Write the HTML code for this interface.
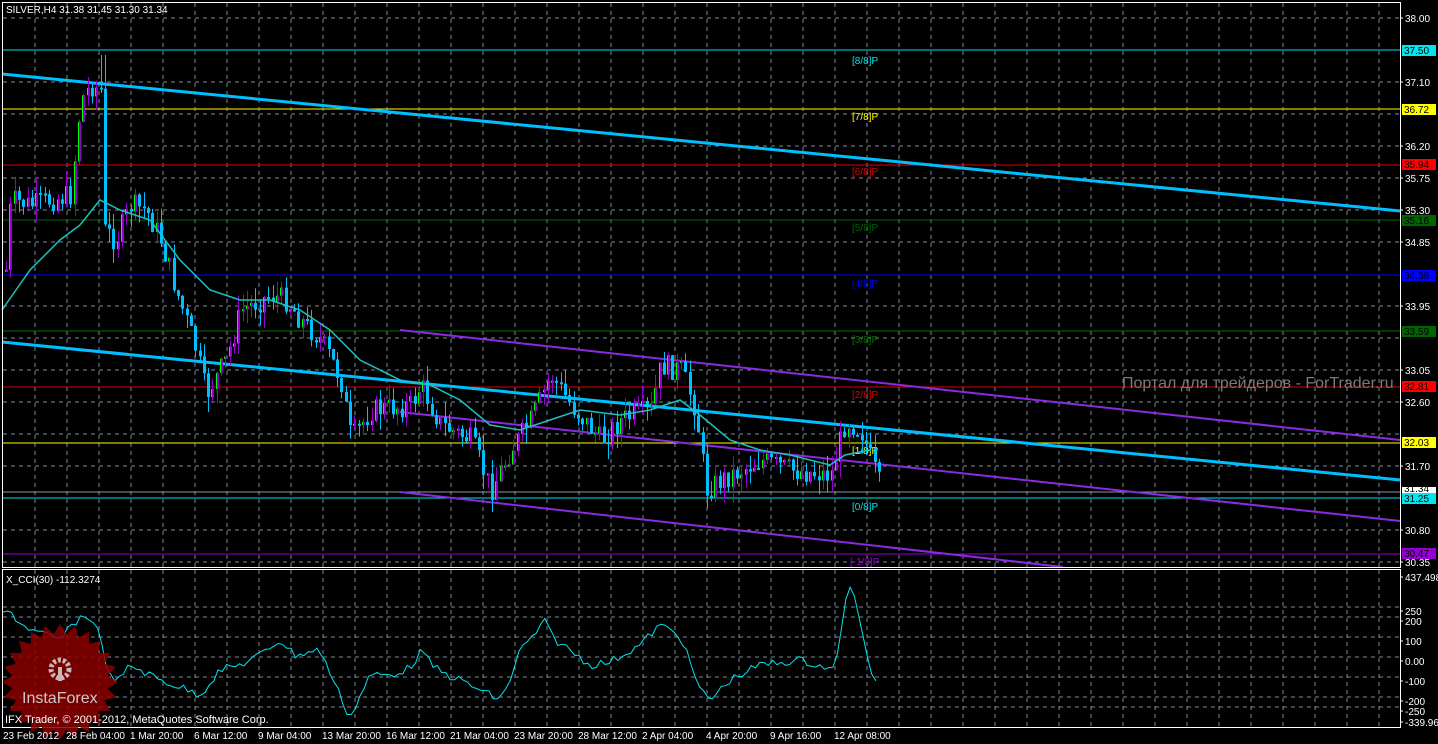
<!DOCTYPE html>
<html><head><meta charset="utf-8"><style>
html,body{margin:0;padding:0;background:#000;}
body{width:1438px;height:744px;overflow:hidden;position:relative;font-family:"Liberation Sans",sans-serif;}
svg{position:absolute;left:0;top:0;}
text{font-family:"Liberation Sans",sans-serif;}
</style></head><body>
<svg id="s" width="1438" height="744" xmlns="http://www.w3.org/2000/svg">
<rect width="1438" height="744" fill="#000"/>
<g id="grid" stroke="#7a8896" stroke-width="1" stroke-dasharray="4,4"></g>
<g stroke-width="1">
<line x1="3" y1="50" x2="1400" y2="50" stroke="#00e5ee"/>
<line x1="3" y1="109" x2="1400" y2="109" stroke="#ffff00"/>
<line x1="3" y1="165" x2="1400" y2="165" stroke="#e00000"/>
<line x1="3" y1="220" x2="1400" y2="220" stroke="#006400"/>
<line x1="3" y1="275" x2="1400" y2="275" stroke="#0000ff"/>
<line x1="3" y1="331" x2="1400" y2="331" stroke="#007000"/>
<line x1="3" y1="387" x2="1400" y2="387" stroke="#e00000"/>
<line x1="3" y1="443" x2="1400" y2="443" stroke="#ffff00"/>
<line x1="3" y1="492" x2="1400" y2="492" stroke="#8a9aa8"/>
<line x1="3" y1="498" x2="1400" y2="498" stroke="#00e5ee"/>
<line x1="3" y1="554" x2="1400" y2="554" stroke="#9400d3"/>
</g>
<g font-size="10">
<text x="852" y="64" fill="#00e5ee">[8/8]P</text>
<text x="852" y="120" fill="#ffff00">[7/8]P</text>
<text x="852" y="175" fill="#e00000">[6/8]P</text>
<text x="852" y="231" fill="#006400">[5/8]P</text>
<text x="852" y="287" fill="#0000ff">[4/8]P</text>
<text x="852" y="343" fill="#007000">[3/8]P</text>
<text x="852" y="398" fill="#e00000">[2/8]P</text>
<text x="852" y="454" fill="#ffff00">[1/8]P</text>
<text x="852" y="510" fill="#00e5ee">[0/8]P</text>
<text x="850" y="565" fill="#9400d3">[-1/8]P</text>
</g>
<text x="1122" y="388" fill="#7a7a7a" font-size="16">Портал для трейдеров - ForTrader.ru</text>
<line x1="2" y1="74" x2="1400" y2="211" stroke="#00bfff" stroke-width="3"/>
<line x1="2" y1="342" x2="1400" y2="480" stroke="#00bfff" stroke-width="3"/>
<line x1="400" y1="330" x2="1400" y2="440" stroke="#8a2be2" stroke-width="2"/>
<line x1="400" y1="412" x2="1400" y2="521" stroke="#8a2be2" stroke-width="2"/>
<line x1="400" y1="492" x2="1063" y2="567" stroke="#8a2be2" stroke-width="2"/>
<g id="candles"></g>
<polyline id="ma" fill="none" stroke="#20c0c0" stroke-width="1.5" points=""/>
<polyline id="cci" fill="none" stroke="#00e5ee" stroke-width="1" points=""/>
<rect x="2.5" y="2.5" width="1398" height="565" fill="none" stroke="#fff" stroke-width="1"/>
<rect x="2.5" y="569.5" width="1398" height="158" fill="none" stroke="#fff" stroke-width="1"/>
<g id="axis" font-size="10" fill="#fff"></g>
<g font-size="10">
<rect x="1402" y="45" width="34" height="11" fill="#00e5ee"/><text x="1404" y="54" fill="#000">37.50</text>
<rect x="1402" y="104" width="34" height="11" fill="#ffff00"/><text x="1404" y="113" fill="#000">36.72</text>
<rect x="1402" y="159" width="34" height="11" fill="#ff0000"/><text x="1404" y="168" fill="#000">35.94</text>
<rect x="1402" y="215" width="34" height="11" fill="#006400"/><text x="1404" y="224" fill="#000">35.16</text>
<rect x="1402" y="270" width="34" height="11" fill="#0000ff"/><text x="1404" y="279" fill="#000">34.38</text>
<rect x="1402" y="326" width="34" height="11" fill="#006400"/><text x="1404" y="335" fill="#000">33.59</text>
<rect x="1402" y="381" width="34" height="11" fill="#ff0000"/><text x="1404" y="390" fill="#000">32.81</text>
<rect x="1402" y="437" width="34" height="11" fill="#ffff00"/><text x="1404" y="446" fill="#000">32.03</text>
<rect x="1402" y="487" width="34" height="6" fill="#fff"/><text x="1404" y="492" fill="#000">31.34</text>
<rect x="1402" y="493" width="34" height="11" fill="#00e5ee"/><text x="1404" y="502" fill="#000">31.25</text>
<rect x="1402" y="548" width="34" height="11" fill="#9400d3"/><text x="1404" y="557" fill="#000">30.47</text>
</g>
<polygon id="star" fill="#8b0000" opacity="0.85" points=""/>
<g fill="#d8d8d8" opacity="0.85">
<circle cx="60" cy="669" r="9" fill="none" stroke="#d8d8d8" stroke-width="5" stroke-dasharray="3,2"/>
<rect x="58" y="667" width="4" height="14"/>
</g>
<text x="22" y="703" fill="#dcdcdc" font-size="16" opacity="0.9">InstaForex</text>
<text x="6" y="13" fill="#fff" font-size="10">SILVER,H4  31.38 31.45 31.30 31.34</text>
<text x="6" y="583" fill="#fff" font-size="10">X_CCI(30) -112.3274</text>
<text x="5" y="723" fill="#fff" font-size="11">IFX Trader, © 2001-2012, MetaQuotes Software Corp.</text>
<g font-size="10" fill="#fff">
<text x="3" y="739">23 Feb 2012</text><text x="66" y="739">28 Feb 04:00</text><text x="130" y="739">1 Mar 20:00</text>
<text x="194" y="739">6 Mar 12:00</text><text x="258" y="739">9 Mar 04:00</text><text x="322" y="739">13 Mar 20:00</text>
<text x="386" y="739">16 Mar 12:00</text><text x="450" y="739">21 Mar 04:00</text><text x="514" y="739">23 Mar 20:00</text>
<text x="578" y="739">28 Mar 12:00</text><text x="642" y="739">2 Apr 04:00</text><text x="706" y="739">4 Apr 20:00</text>
<text x="770" y="739">9 Apr 16:00</text><text x="834" y="739">12 Apr 08:00</text>
</g>
</svg>
<script>
(function(){
var NS="http://www.w3.org/2000/svg";
function el(p,t,a){var e=document.createElementNS(NS,t);for(var k in a)e.setAttribute(k,a[k]);p.appendChild(e);return e;}
var g=document.getElementById('grid');
for(var x=35;x<1400;x+=32){el(g,'line',{x1:x,y1:3,x2:x,y2:567});el(g,'line',{x1:x,y1:570,x2:x,y2:727});}
[18,82,114,146,178,210,242,306,338,370,402,434,466,530,562].forEach(function(y){el(g,'line',{x1:3,y1:y,x2:1400,y2:y});});
[607,617,637,657,677,697,707].forEach(function(y){el(g,'line',{x1:3,y1:y,x2:1400,y2:y});});
var ax=document.getElementById('axis');
var lab=[[18,'38.00'],[82,'37.10'],[146,'36.20'],[178,'35.75'],[210,'35.30'],[242,'34.85'],[306,'33.95'],[370,'33.05'],[402,'32.60'],[466,'31.70'],[530,'30.80'],[562,'30.35'],
[577,'437.498'],[611,'250'],[621,'200'],[641,'100'],[661,'0.00'],[681,'-100'],[701,'-200'],[711,'-250'],[722,'-339.963']];
lab.forEach(function(l){var t=el(ax,'text',{x:1405,y:l[0]+4});t.textContent=l[1];el(ax,'line',{x1:1400,y1:l[0],x2:1403,y2:l[0],stroke:'#fff'});});
function interp(pts,x){for(var i=1;i<pts.length;i++){if(x<=pts[i][0]){var a=pts[i-1],b=pts[i];return a[1]+(b[1]-a[1])*(x-a[0])/(b[0]-a[0]);}}return pts[pts.length-1][1];}
var P=[[5,270],[10,200],[30,205],[70,195],[80,100],[90,85],[100,90],[103,230],[115,240],[130,205],[145,210],[160,240],[175,290],[195,350],[205,395],[225,360],[240,310],[270,295],[285,300],[300,320],[320,340],[340,380],[350,440],[370,410],[410,405],[420,385],[440,425],[470,440],[490,490],[510,450],[530,420],[550,375],[570,405],[600,440],[620,420],[650,410],[660,365],[680,370],[695,410],[705,490],[720,480],[740,470],[760,460],[790,470],[830,475],[845,420],[860,430],[870,460],[880,490]];
var seed=7;function rnd(){seed=(seed*9301+49297)%233280;return seed/233280;}
var cg=document.getElementById('candles');
var prev=interp(P,5);
for(var x=5;x<=880;x+=4.3){
 var c=interp(P,x)+(rnd()-0.5)*24;var o=prev;prev=c;
 var hi=Math.min(o,c)-rnd()*16,lo=Math.max(o,c)+rnd()*16;
 if(x>98&&x<104){hi=55;}
 var bull=c<o;var xx=Math.round(x);
 el(cg,'line',{x1:xx+1.5,y1:hi,x2:xx+1.5,y2:lo,stroke:bull?'#9400d3':'#00bfff','stroke-width':1});
 var by=Math.min(o,c),h=Math.max(2,Math.abs(o-c));
 if(bull){el(cg,'rect',{x:xx,y:by,width:3,height:h,fill:'#00ff00'});el(cg,'rect',{x:xx+1,y:by,width:2,height:h,fill:'#9400d3'});}
 else el(cg,'rect',{x:xx,y:by,width:3,height:h,fill:'#00bfff'});
}
var MA=[[2,310],[30,270],[60,240],[80,225],[100,200],[120,210],[150,220],[180,260],[210,290],[240,300],[270,300],[300,310],[330,330],[360,360],[400,380],[430,385],[460,400],[490,425],[520,430],[550,420],[580,410],[620,415],[650,410],[680,400],[700,415],[730,440],[760,450],[790,455],[830,465],[845,455],[870,450]];
document.getElementById('ma').setAttribute('points',MA.map(function(p){return p.join(',');}).join(' '));
var C=[[3,615],[10,611],[20,623],[35,632],[60,640],[80,617],[95,620],[100,640],[110,677],[120,680],[130,665],[160,680],[180,687],[200,695],[220,670],[240,665],[260,655],[280,640],[295,655],[320,650],[350,718],[370,675],[390,675],[410,668],[420,652],[440,672],[460,680],[480,690],[500,700],[510,680],[520,650],[530,640],[545,622],[555,640],[570,650],[590,665],[610,662],[640,645],[660,625],[680,635],[700,690],[710,700],[730,680],[760,665],[800,660],[835,670],[840,640],[848,580],[858,610],[870,675],[880,680]];
var cp=[];for(var x2=3;x2<=880;x2+=4.3){cp.push(x2.toFixed(1)+','+(interp(C,x2)+(rnd()-0.5)*8).toFixed(1));}
document.getElementById('cci').setAttribute('points',cp.join(' '));
var st=[];for(var i=0;i<48;i++){var a=i*Math.PI/24,r=i%2?48:58;st.push((60+r*Math.cos(a)).toFixed(1)+','+(682+r*Math.sin(a)).toFixed(1));}
document.getElementById('star').setAttribute('points',st.join(' '));
})();
</script>
</body></html>
